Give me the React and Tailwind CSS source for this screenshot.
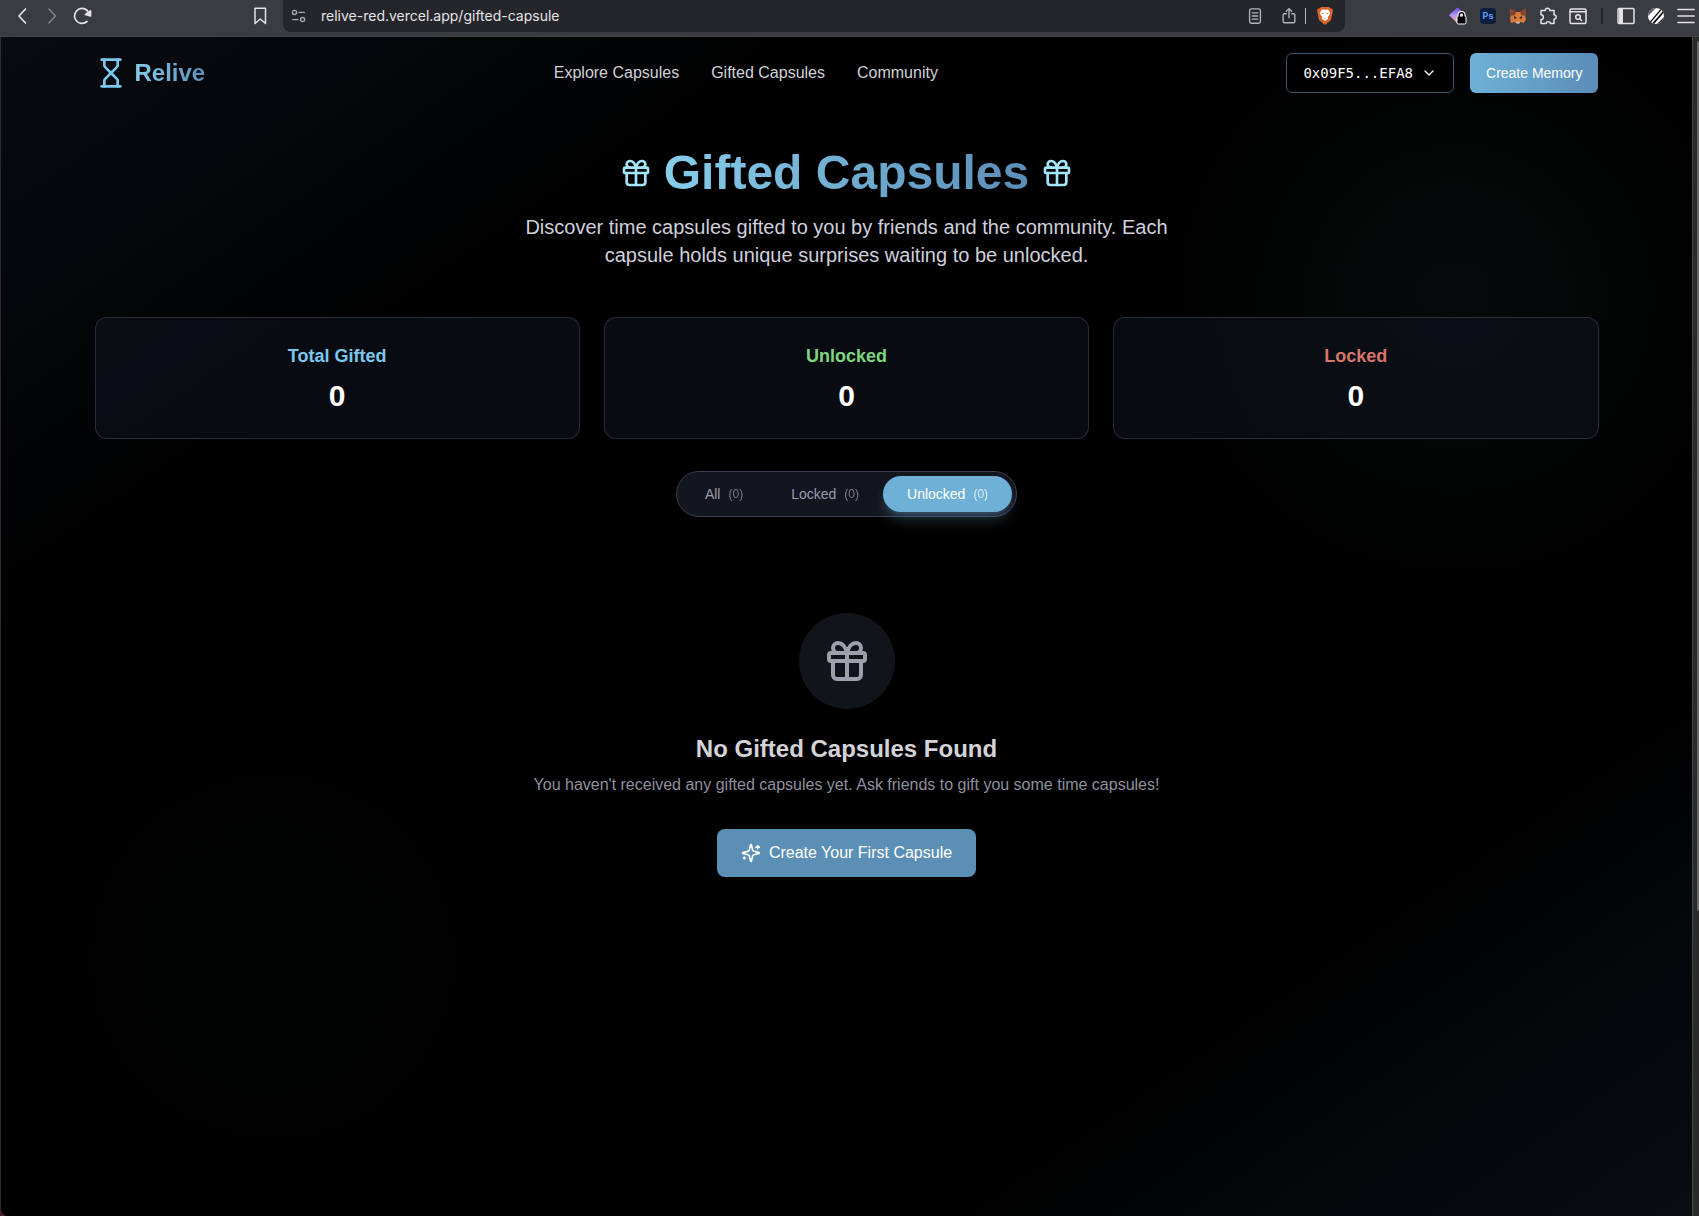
import React, { useState } from 'react';
import { ChevronDown, Gift, Hourglass } from 'lucide-react';

const navLinks = [
    { label: 'Explore Capsules', href: '#explore' },
    { label: 'Gifted Capsules', href: '#gifted' },
    { label: 'Community', href: '#community' },
];

const stats = [
    { label: 'Total Gifted', value: 0, color: 'text-[#7cc8ec]' },
    { label: 'Unlocked', value: 0, color: 'text-[#7fd67c]' },
    { label: 'Locked', value: 0, color: 'text-[#d8756b]' },
];

const filters = [
    { id: 'all', label: 'All', count: 0 },
    { id: 'locked', label: 'Locked', count: 0 },
    { id: 'unlocked', label: 'Unlocked', count: 0 },
];

const ToolButton = ({ label, color = 'text-[#e3e3e6]', className = '', children }) => (
    <button type="button" aria-label={label} className={`flex h-5 w-5 items-center justify-center ${color} ${className}`}>
        {children}
    </button>
);

const Line = ({ children, size = 20, width = 1.5 }) => (
    <svg width={size} height={size} viewBox="0 0 20 20" fill="none" stroke="currentColor" strokeWidth={width} strokeLinecap="round" strokeLinejoin="round" className="shrink-0">
        {children}
    </svg>
);

const Sparkles = () => (
    <svg width="20" height="20" viewBox="0 0 24 24" fill="none" stroke="currentColor" strokeWidth="2" strokeLinecap="round" strokeLinejoin="round" className="shrink-0">
        <path d="M9.937 15.500A2 2 0 0 0 8.500 14.063l-6.135-1.582a.5.5 0 0 1 0-.962L8.500 9.936A2 2 0 0 0 9.937 8.500l1.582-6.135a.5.5 0 0 1 .963 0L14.063 8.500A2 2 0 0 0 15.500 9.937l6.135 1.581a.5.5 0 0 1 0 .964L15.500 14.063a2 2 0 0 0-1.437 1.437l-1.582 6.135a.5.5 0 0 1-.963 0z" />
        <path d="M20 3v4M22 5h-4M4 17v2M5 18H3" />
    </svg>
);

const BrowserBar = () => (
    <div className="flex h-[37px] items-start border-b border-[#44444b] bg-[#3b3b42] pl-3 pr-[3px]">
        <div className="flex h-8 w-[271px] shrink-0 items-center gap-[10px]">
            <ToolButton label="Back"><Line width={1.7}><path d="M13.500 3 7 10l6.500 7" /></Line></ToolButton>
            <ToolButton label="Forward" color="text-[#85858b]"><Line><path d="M7 3l6.500 7L7 17" /></Line></ToolButton>
            <ToolButton label="Reload">
                <Line width={1.7}>
                    <path d="M15 15.500A7.500 7.500 0 1 1 17.300 8" />
                    <path d="m13.500 8.500 5-3.500v5Z" fill="currentColor" />
                </Line>
            </ToolButton>
            <ToolButton label="Bookmark" className="ml-auto mr-[13px]"><Line><path d="M5 2.200h10.500v15.300l-5.250-4.500L5 17.500Z" /></Line></ToolButton>
        </div>
        <div className="flex h-8 min-w-0 flex-1 items-center rounded-b-lg bg-[#25262b] pl-[7px] pr-[10px] text-[#a9a9ae]">
            <Line size={18}>
                <circle cx="5" cy="6" r="2.300" /><path d="M10 6h6" />
                <circle cx="14" cy="14" r="2.300" /><path d="M3 14h6" />
            </Line>
            <input
                type="text"
                aria-label="Address"
                defaultValue="relive-red.vercel.app/gifted-capsule"
                className="ml-[13px] min-w-0 flex-1 bg-transparent font-[Inter,sans-serif] text-sm text-[#e4e4e7] outline-none"
            />
            <div className="flex items-center gap-[14px]">
                <ToolButton label="Reader" color="text-[#b4b4b8]"><Line size={18}><rect x="4" y="2" width="12" height="16" rx="2" /><path d="M7 6.500h6M7 10h6M7 13.500h6" /></Line></ToolButton>
                <ToolButton label="Share" color="text-[#b4b4b8]"><Line size={18}><path d="M7 7.500H5A1.500 1.500 0 0 0 3.500 9v7A1.500 1.500 0 0 0 5 17.500h10a1.500 1.500 0 0 0 1.500-1.500V9A1.500 1.500 0 0 0 15 7.500h-2M10 12V2M7 4.800l3-3 3 3" /></Line></ToolButton>
            </div>
            <span className="mx-[6px] h-4 w-px bg-[#b4b4b8]" />
            <ToolButton label="Shields" className="ml-[3px]">
                <svg width="20" height="20" viewBox="0 0 20 20">
                    <path d="M6 1h8l1.500 1.600 1.700-.2L18 5l-.5 1.500L16 14l-6 5-6-5L2.500 6.500 2 5l.8-2.600 1.700.2Z" fill="#d9642c" />
                    <path d="m10 3.800 3-.4 2.200 3-.7 2.300-1.700 2.200.4 1.800L10 15l-3.200-2.300.4-1.800-1.700-2.200L4.800 6.400l2.200-3Z" fill="#fff" />
                    <path d="m6.500 6.800 2.500.8-1 1ZM13.500 6.800l-2.500.8 1 1ZM9 11.500l1 .6 1-.6-1 1.400Z" fill="#d9642c" />
                </svg>
            </ToolButton>
        </div>
        <div className="ml-[103px] flex h-8 shrink-0 items-center gap-[10px]">
            <ToolButton label="Wallet extension">
                <svg width="20" height="20" viewBox="0 0 20 20">
                    <defs>
                        <linearGradient id="gem" x1="0.300" y1="0" x2="0.400" y2="1">
                            <stop offset="0" stopColor="#6a4cf0" /><stop offset=".5" stopColor="#b79af0" /><stop offset="1" stopColor="#f5b39b" />
                        </linearGradient>
                    </defs>
                    <path d="m9.500 2 8 7-8 8-8-8Z" fill="url(#gem)" stroke="url(#gem)" strokeLinejoin="round" />
                    <path d="M11.300 10.500V9a2.200 2.200 0 0 1 4.400 0v1.500" fill="none" stroke="#fff" strokeWidth="3.500" />
                    <rect x="9" y="10" width="9" height="8" rx="1.500" fill="#000" stroke="#fff" />
                    <path d="M11.300 11V9a2.200 2.200 0 0 1 4.400 0v2" fill="none" stroke="#000" strokeWidth="1.500" />
                </svg>
            </ToolButton>
            <ToolButton label="Photoshop">
                <span className="flex h-4 w-4 items-center justify-center rounded-sm bg-[#0c1e3e] font-[Inter,sans-serif] text-[9px] font-bold text-[#5d9bf0]">Ps</span>
            </ToolButton>
            <ToolButton label="MetaMask">
                <svg width="20" height="20" viewBox="0 0 20 20">
                    <path d="m2 2.500 6 3.500h4l6-3.500-.8 7.500.8 3-2 4-3.500-1-2 1.500h-2L6.500 16 3 17l-1-4 .8-3Z" fill="#d97a3a" />
                    <path d="m2 2.500 6 3.500-1 3-4.500 1ZM18 2.500l-6 3.500 1 3 4.500 1Z" fill="#84452c" />
                    <path d="m6 10 2.500 1.500-.3 1.300-2.200-.3ZM14 10l-2.500 1.500.3 1.300 2.200-.3Z" fill="#34262a" />
                    <path d="M8 15.500h4l-.5 2h-3Z" fill="#c9b5a8" />
                </svg>
            </ToolButton>
            <ToolButton label="Extensions"><Line><path d="M3 4.500h4.300a2.200 2.200 0 1 1 4.400 0H16v4.300a2.200 2.200 0 1 1 0 4.400v4.300h-3.500a2.300 2.300 0 0 0-4.500 0H3v-4a2.300 2.300 0 0 0 0-4.700Z" /></Line></ToolButton>
            <ToolButton label="Search tabs"><Line><rect x="2" y="3" width="16" height="14.500" rx="1.500" /><path d="M2 5.800h16" /><circle cx="10" cy="11" r="2.300" /><path d="m12 13 1.500 1.500" /></Line></ToolButton>
            <span className="mx-[3px] h-4 w-[2px] bg-[#242429]" />
            <ToolButton label="Sidebar"><Line><rect x="2" y="2.500" width="16" height="15" rx="1" /><path d="M3 3h4v14H3Z" fill="currentColor" stroke="none" /></Line></ToolButton>
            <ToolButton label="Profile">
                <svg width="20" height="20" viewBox="0 0 20 20">
                    <clipPath id="ball"><circle cx="10" cy="10" r="8" /></clipPath>
                    <g clipPath="url(#ball)">
                        <rect width="20" height="20" fill="#fff" />
                        <path d="M0 0h12L0 12Z" fill="#5c5c66" />
                        <path d="M15.500 3 3.500 17" stroke="#111" strokeWidth="1.200" />
                        <path d="M19 4 6 19" stroke="#111" strokeWidth="1.800" />
                        <path d="M20 9v11H9Z" fill="#2a2a2e" />
                    </g>
                </svg>
            </ToolButton>
            <ToolButton label="Menu"><Line width={1.7}><path d="M2 3.500h16M2 10h16M2 16.500h16" /></Line></ToolButton>
        </div>
    </div>
);

const Header = () => (
    <header className="mx-auto flex w-full max-w-[1536px] items-center justify-between px-4 py-4">
        <a href="#home" className="flex items-center gap-2">
            <Hourglass size={32} className="text-[#7cc8ec]" />
            <span className="bg-gradient-to-r from-[#87ceeb] to-[#5b8db8] bg-clip-text text-2xl font-bold text-transparent">Relive</span>
        </a>
        <nav className="flex gap-8 text-base text-[#d1d1d6]">
            {navLinks.map((link) => (
                <a key={link.label} href={link.href} className="hover:text-white">{link.label}</a>
            ))}
        </nav>
        <div className="flex items-center gap-4 text-sm">
            <button type="button" className="flex h-10 items-center gap-2 rounded-md border border-[#35566b] bg-black px-4 font-['DejaVu_Sans_Mono',monospace] text-white">
                0x09F5...EFA8
                <ChevronDown size={16} />
            </button>
            <button type="button" className="h-10 rounded-md bg-gradient-to-r from-[#6fb1d6] to-[#5b8db8] px-4 text-white">Create Memory</button>
        </div>
    </header>
);

const App = () => {
    const [active, setActive] = useState('unlocked');

    return (
        <div className="flex min-h-screen flex-col bg-[#4a1f28] font-['Liberation_Sans',Arial,sans-serif]">
            <BrowserBar />
            <div className="flex flex-1 overflow-hidden rounded-bl-lg border-l border-[#2c2c2e] bg-black">
                <div className="min-w-0 flex-1 bg-[radial-gradient(circle_at_86%_22%,#7fb8c80e_0%,transparent_320px),radial-gradient(circle_at_16%_78%,#7fb8c805_0%,transparent_300px),linear-gradient(to_bottom_right,#080c11_0%,#000_26%,#000_76%,#090d12_100%)]">
                    <Header />
                    <main className="mx-auto max-w-[1536px] px-4 py-10">
                        <div className="mb-12 text-center">
                            <div className="mb-4 flex items-center justify-center gap-3">
                                <Gift size={32} className="text-[#a5e5fb]" />
                                <h1 className="bg-gradient-to-r from-[#87ceeb] to-[#5b8db8] bg-clip-text text-5xl leading-none font-bold text-transparent">Gifted Capsules</h1>
                                <Gift size={32} className="text-[#a5e5fb]" />
                            </div>
                            <p className="mx-auto max-w-2xl text-xl text-[#cfd0dc]">
                                Discover time capsules gifted to you by friends and the community. Each capsule holds unique surprises waiting to be unlocked.
                            </p>
                        </div>

                        <div className="mb-8 grid grid-cols-3 gap-6">
                            {stats.map((stat) => (
                                <div key={stat.label} className="rounded-xl border border-[#3c3f55]/60 bg-[#0f131e]/60 p-6 text-center">
                                    <h3 className={`mb-2 text-lg font-bold ${stat.color}`}>{stat.label}</h3>
                                    <p className="text-3xl font-bold text-white">{stat.value}</p>
                                </div>
                            ))}
                        </div>

                        <div className="mb-8 flex justify-center">
                            <div className="flex rounded-full border border-[#3a3e54] bg-[#13151f] p-1 text-sm">
                                {filters.map((filter) => (
                                    <button
                                        key={filter.id}
                                        type="button"
                                        aria-pressed={active === filter.id}
                                        onClick={() => setActive(filter.id)}
                                        className={`flex items-center gap-2 rounded-full px-6 py-2 ${active === filter.id ? 'bg-[#6fb1d6] text-white shadow-lg shadow-[#6fb1d6]/30' : 'text-[#9a9cae]'}`}
                                    >
                                        {filter.label}
                                        <span className="text-xs opacity-75">({filter.count})</span>
                                    </button>
                                ))}
                            </div>
                        </div>

                        <div className="flex flex-col items-center py-16 text-center">
                            <div className="mb-6 flex h-24 w-24 items-center justify-center rounded-full bg-[#11141b]">
                                <Gift size={48} className="text-[#9d9fad]" />
                            </div>
                            <h2 className="mb-2 text-2xl font-bold text-[#d4d4d8]">No Gifted Capsules Found</h2>
                            <p className="mb-8 text-base text-[#8e909e]">You haven't received any gifted capsules yet. Ask friends to gift you some time capsules!</p>
                            <button type="button" className="flex h-12 items-center gap-2 rounded-lg bg-[#5b8fb5] px-6 text-base text-white">
                                <Sparkles />
                                Create Your First Capsule
                            </button>
                        </div>
                    </main>
                </div>
                <div className="flex w-[7px] justify-end border-l border-[#44464a] bg-[#2b2b2b] pt-1">
                    <div className="h-[74%] w-[2px] rounded-l-full bg-[#6b6b6b]" />
                </div>
            </div>
        </div>
    );
};

export default App;
